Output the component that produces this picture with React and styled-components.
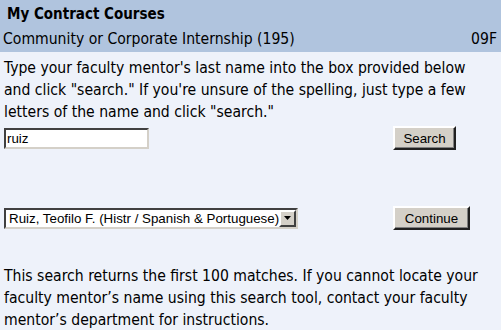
import React from "react";
import styled, { createGlobalStyle } from "styled-components";

const Global = createGlobalStyle`
  body {
    margin: 0;
    background: #eef2fa;
  }
`;

const Page = styled.div`
  width: 501px;
  height: 330px;
  background: #eef2fa;
  font-family: "DejaVu Sans Condensed", "DejaVu Sans", sans-serif;
  color: #000;
  overflow: hidden;
`;

const Header = styled.div`
  background: #b0c4de;
  height: 52px;
  display: flex;
  flex-direction: column;
`;

const Title = styled.div`
  font-weight: bold;
  font-size: 15px;
  padding: 5px 7px 0;
  height: 23px;
`;

const SubRow = styled.div`
  display: flex;
  justify-content: space-between;
  font-size: 15.6px;
  padding: 2px 4px 0 3px;
`;

const Body = styled.div`
  padding: 5px 4px 0;
`;

const Text = styled.p`
  margin: ${(p) => p.$top || 0}px 0 0;
  width: 482px;
  font-size: 15.6px;
  line-height: 22px;
`;

const FormRow = styled.div`
  display: flex;
  align-items: center;
  justify-content: space-between;
  padding-right: ${(p) => p.$right}px;
  margin-top: ${(p) => p.$top}px;
`;

const TextInput = styled.input`
  width: 145px;
  height: 21px;
  box-sizing: border-box;
  border: 2px solid;
  border-color: #404040 #d4d0c8 #d4d0c8 #404040;
  background: #fff;
  font-family: "Liberation Sans", Arial, sans-serif;
  font-size: 13.33px;
  padding: 0 1px;
  outline: none;
`;

const Button = styled.button`
  width: ${(p) => p.$w}px;
  height: 24px;
  box-sizing: border-box;
  background: #d4d0c8;
  border: 2px solid;
  border-color: #fff #202020 #202020 #fff;
  box-shadow: inset -1px -1px 0 #808080;
  font-family: "Liberation Sans", Arial, sans-serif;
  font-size: 13.33px;
  color: #000;
  padding: 0;
`;

const SelectBox = styled.div`
  display: flex;
  align-items: center;
  width: 294px;
  height: 21px;
  box-sizing: border-box;
  border: 2px solid;
  border-color: #404040 #d4d0c8 #d4d0c8 #404040;
  background: #fff;
  font-family: "Liberation Sans", Arial, sans-serif;
  font-size: 13.33px;
`;

const SelectText = styled.span`
  flex: 1;
  padding-left: 3px;
  white-space: nowrap;
  overflow: hidden;
`;

const Arrow = styled.span`
  width: 17px;
  height: 17px;
  box-sizing: border-box;
  background: #d4d0c8;
  border: 2px solid;
  border-color: #fff #404040 #404040 #fff;
  display: flex;
  align-items: center;
  justify-content: center;
`;

export default function App() {
  return (
    <Page>
      <Global />
      <Header>
        <Title>My Contract Courses</Title>
        <SubRow>
          <span>Community or Corporate Internship (195)</span>
          <span>09F</span>
        </SubRow>
      </Header>
      <Body>
        <Text>
          Type your faculty mentor's last name into the box provided below and
          click "search." If you're unsure of the spelling, just type a few
          letters of the name and click "search."
        </Text>
        <FormRow $right={41} $top={3}>
          <TextInput defaultValue="ruiz" />
          <Button $w={63}>Search</Button>
        </FormRow>
        <FormRow $right={27} $top={56}>
          <SelectBox>
            <SelectText>Ruiz, Teofilo F. (Histr / Spanish &amp; Portuguese)</SelectText>
            <Arrow>
              <svg width="7" height="4" viewBox="0 0 7 4">
                <path d="M0 0h7L3.5 4z" fill="#000" />
              </svg>
            </Arrow>
          </SelectBox>
          <Button $w={77}>Continue</Button>
        </FormRow>
        <Text $top={35}>
          This search returns the first 100 matches. If you cannot locate your
          faculty mentor’s name using this search tool, contact your faculty
          mentor’s department for instructions.
        </Text>
      </Body>
    </Page>
  );
}
